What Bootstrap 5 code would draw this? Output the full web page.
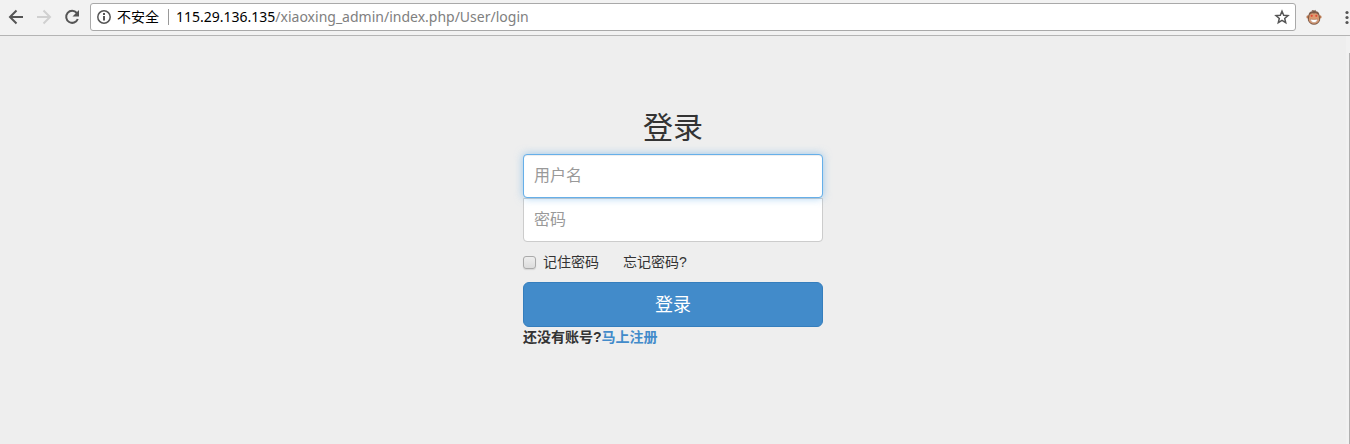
<!DOCTYPE html>
<html lang="zh-CN">
<head>
<meta charset="utf-8">
<meta name="viewport" content="width=device-width, initial-scale=1">
<title>登录</title>
<link href="https://cdn.jsdelivr.net/npm/bootstrap@5.3.0/dist/css/bootstrap.min.css" rel="stylesheet">
<style>
body { background: #eee; color: #333; font: 14px/20px "Liberation Sans", "Noto Sans CJK SC", sans-serif; }
.toolbar { height: 36px; padding: 3px 0 4px 8px; background: #f2f2f2; border-bottom: 1px solid #b4b4b4; overflow: hidden; }
.tool { width: 16px; height: 16px; padding: 0; border: 0; background: none; display: block; flex: none; }
.tool svg { display: block; }
.nav-tools { gap: 12px; margin-right: 10px; }
.address { height: 28px; padding: 0 5px 0 5px; background: #fff; border: 1px solid #a9a9a9; border-radius: 3px; font: 14px/20px "Noto Sans", "Noto Sans CJK SC", sans-serif; color: #000; }
.insecure { margin-left: 5px; padding-right: 9px; }
.divider { width: 1px; height: 16px; background: #999; margin-right: 7px; }
.url-path { color: #808080; }
.ext { margin: 0 23px 0 10px; }
.dots { width: 5px; }
.scroll-track { width: 4px; background: #f1f1f1; padding-top: 17px; }
.scroll-thumb { width: 1px; margin-left: auto; background: #b0b0b0; }
.login-form { width: 100%; max-width: 300px; margin: 76px auto 0; }
.login-form h1 { font-size: 30px; line-height: 32px; font-weight: 400; margin-bottom: 10px; }
.field { height: 44px; padding: 10px; font-size: 16px; line-height: 22px; border: 1px solid #ccc; border-radius: 4px; position: relative; }
.field::placeholder { color: #999; }
.field:focus { z-index: 1; border-color: #66afe9; box-shadow: inset 0 1px 1px rgba(0,0,0,.075), 0 0 8px rgba(102,175,233,.6); }
.field.pwd { border-top-left-radius: 0; border-top-right-radius: 0; }
.tick { appearance: none; width: 13px; height: 13px; margin: 0 7px 0 0; border: 1px solid #aaa; border-radius: 3px; background: linear-gradient(#eee, #dcdcdc); box-shadow: 0 1px 1px #d5d5d5; }
.tick:checked { background: #428bca; }
.options { margin: 10px 0; }
.forgot { margin-left: 24px; color: #333; }
.submit { height: 45px; padding: 0; font-size: 18px; line-height: 24px; color: #fff; border-radius: 6px; --bs-btn-bg: #428bca; --bs-btn-border-color: #357ebd; --bs-btn-hover-bg: #3276b1; }
.register { color: #428bca; }
</style>
</head>
<body class="d-flex flex-column min-vh-100">
<header class="toolbar d-flex align-items-center">
  <div class="nav-tools d-flex">
    <button class="tool" type="button" aria-label="后退"><svg width="16" height="16" fill="none" stroke="#555" stroke-width="2"><path d="M15 8H2.500M8.500 1.500 2 8l6.500 6.500"/></svg></button>
    <button class="tool" type="button" aria-label="前进"><svg width="16" height="16" fill="none" stroke="#d0d0d0" stroke-width="2"><path d="M1 8h12.500M7.500 1.500 14 8l-6.500 6.500"/></svg></button>
    <button class="tool" type="button" aria-label="重新加载"><svg width="16" height="16" fill="none" stroke="#555" stroke-width="2"><path d="M12.800 4A6 6 0 1 0 13.800 10"/><path d="M15 1v6.500H8.500z" fill="#555" stroke="none"/></svg></button>
  </div>
  <div class="address d-flex align-items-center flex-grow-1">
    <svg width="16" height="16" fill="none" stroke="#555"><circle cx="8" cy="8" r="6.200" stroke-width="1.500"/><path d="M8 7v4.500M8 4v2" stroke-width="2"/></svg>
    <span class="insecure">不安全</span>
    <span class="divider"></span>
    <span>115.29.136.135<span class="url-path">/xiaoxing_admin/index.php/User/login</span></span>
    <button class="tool ms-auto" type="button" aria-label="收藏"><svg width="16" height="16" fill="none" stroke="#555" stroke-width="1.500"><path d="m8 2.200 1.700 4 4.300.4-3.300 2.800 1 4.200L8 11.400l-3.700 2.200 1-4.200L2 6.600l4.300-.4z"/></svg></button>
  </div>
  <button class="tool ext" type="button" aria-label="扩展程序"><svg width="16" height="16"><circle cx="2.200" cy="8" r="1.800" fill="#b87850"/><circle cx="13.800" cy="8" r="1.800" fill="#b87850"/><path d="M2.500 6Q3 2.500 6.500 2.200L5.500 1l3 .4 1-.6.3 1.400Q13 2.500 13.500 6l.7 5q-1.700 4.700-6.200 4.700T1.800 11z" fill="#7b5a48"/><path d="M3.500 6Q5.500 3.500 8 4.600 10.500 3.500 12.500 6l.7 5q-1.200 3.800-5.200 3.800T2.800 11z" fill="#dc9a70"/><circle cx="5.700" cy="6.800" r="1.100" fill="#e04a38"/><circle cx="10.300" cy="6.800" r="1.100" fill="#e04a38"/><path d="M4.200 10q3.800 1 7.600 0-.5 3.800-3.800 3.800T4.200 10" fill="#fff" stroke="#9a6c54" stroke-width=".5"/></svg></button>
  <button class="tool dots" type="button" aria-label="菜单"><svg width="5" height="16" fill="#555"><circle cx="2" cy="3.500" r="1.600"/><circle cx="2" cy="8.500" r="1.600"/><circle cx="2" cy="13.500" r="1.600"/></svg></button>
</header>
<div class="d-flex flex-grow-1">
  <main class="flex-grow-1">
    <form class="login-form">
      <h1 class="text-center">登录</h1>
      <input class="form-control field" type="text" placeholder="用户名" aria-label="用户名" autofocus>
      <input class="form-control field pwd" type="password" placeholder="密码" aria-label="密码">
      <div class="options d-flex align-items-center">
        <input class="tick" type="checkbox" id="remember"><label for="remember">记住密码</label>
        <a class="forgot text-decoration-none" href="#">忘记密码?</a>
      </div>
      <button class="btn btn-primary submit w-100 d-block" type="submit">登录</button>
      <div class="fw-bold">还没有账号?<a class="register text-decoration-none" href="#">马上注册</a></div>
    </form>
  </main>
  <div class="scroll-track d-flex"><div class="scroll-thumb"></div></div>
</div>
<script src="https://cdn.jsdelivr.net/npm/bootstrap@5.3.0/dist/js/bootstrap.bundle.min.js"></script>
</body>
</html>
